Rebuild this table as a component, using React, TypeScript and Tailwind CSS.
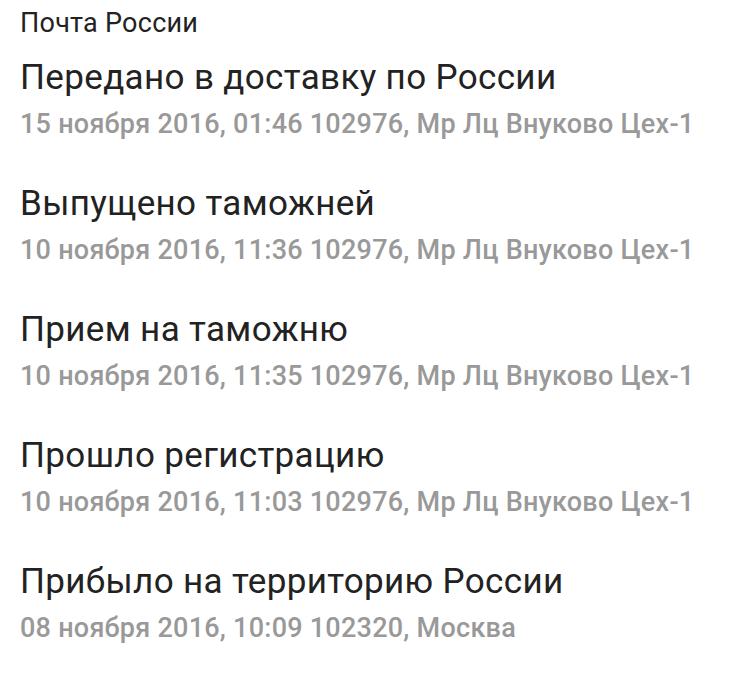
export default function App() {
  const items = [
    ["Передано в доставку по России", "15 ноября 2016, 01:46 102976, Мр Лц Внуково Цех-1"],
    ["Выпущено таможней", "10 ноября 2016, 11:36 102976, Мр Лц Внуково Цех-1"],
    ["Прием на таможню", "10 ноября 2016, 11:35 102976, Мр Лц Внуково Цех-1"],
    ["Прошло регистрацию", "10 ноября 2016, 11:03 102976, Мр Лц Внуково Цех-1"],
    ["Прибыло на территорию России", "08 ноября 2016, 10:09 102320, Москва"],
  ];
  return (
    <div className="min-h-screen bg-white pl-[20px] pt-[7px]" style={{ fontFamily: "Roboto, sans-serif" }}>
      <div className="text-[27px] leading-[32px] tracking-[0.25px] text-[#222]">Почта России</div>
      <div className="mt-[18px] flex flex-col gap-[43px]">
        {items.map(([t, s]) => (
          <div key={t} className="flex flex-col gap-[9px]">
            <div className="text-[35px] leading-[42px] tracking-[0.35px] text-[#222]">{t}</div>
            <div className="text-[27px] leading-[32px] tracking-[0.25px] font-medium text-[#999]">{s}</div>
          </div>
        ))}
      </div>
    </div>
  );
}
